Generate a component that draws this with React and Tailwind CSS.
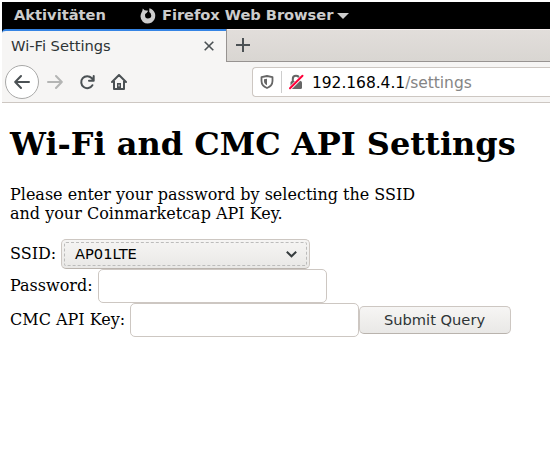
import React from "react";

function TopBar() {
  return (
    <div className="flex h-[27px] items-center bg-black pl-3 text-[14.67px] font-bold leading-none text-[#cccccc]">
      <span className="w-[126px] whitespace-nowrap">Aktivitäten</span>
      <svg className="mr-[6px] h-4 w-4 shrink-0" viewBox="0 0 16 16" fill="#cccccc">
        <path d="M2.8.6 4.6 2.3 8.2 2.8 6.8 4.8 5.2 6Q4.4 10 7.8 10.6 11.6 10.5 11.2 7.2L10.6 5.2 9.2 4 9.4.3Q13.7 1.7 15 5.5 16.2 11.3 11.7 14.5 6.7 17 2.8 13.7-.8 9.8 1.3 5L2.3 3Z" />
      </svg>
      <span className="whitespace-nowrap tracking-[-0.05px]">Firefox Web Browser</span>
      <svg className="ml-1 h-[6px] w-3" viewBox="0 0 12 6" fill="#cccccc">
        <path d="M0 0h12L6 6Z" />
      </svg>
    </div>
  );
}

function TabStrip() {
  return (
    <div className="flex h-[33px] bg-black text-[14.67px] text-[#2e3436]">
      <div className="flex w-[224px] items-center rounded-tl-[4px] border-t-2 border-[#3584e4] bg-[#f6f5f4] pl-[9px]">
        <span className="w-[193px] whitespace-nowrap leading-none">Wi-Fi Settings</span>
        <svg className="mb-[2px] h-[10px] w-[10px]" viewBox="0 0 10 10" stroke="#4b5154" strokeWidth="1.6" fill="none">
          <path d="M.7.7 9.3 9.3M9.3.7.7 9.3" />
        </svg>
      </div>
      <div className="flex flex-1 items-start border-b border-l border-[#979391] bg-linear-to-b from-[#e2dedb] to-[#d9d6d2] pl-[9px] pt-[9px] shadow-[inset_0_1px_#f5eeee]">
        <svg className="h-[14px] w-[14px]" viewBox="0 0 14 14" stroke="#4b5154" strokeWidth="2">
          <path d="M7 0v14M0 7h14" />
        </svg>
      </div>
    </div>
  );
}

function Toolbar() {
  return (
    <div className="flex h-[41px] items-center border-b border-[#cdc7c2] bg-[#f6f5f4] pl-[3px]">
      <div className="flex h-[34px] w-[34px] shrink-0 items-center justify-center rounded-full border border-[#a9a9a8] bg-white">
        <svg className="h-4 w-4" viewBox="0 0 16 16" fill="none" stroke="#4b5154" strokeWidth="2" strokeLinecap="round" strokeLinejoin="round">
          <path d="M15 8H1.5M7 2 1.2 8 7 14" />
        </svg>
      </div>
      <svg className="ml-2 h-4 w-4 shrink-0" viewBox="0 0 16 16" fill="none" stroke="#b4b5b4" strokeWidth="2" strokeLinecap="round" strokeLinejoin="round">
        <path d="M1 8h13.5M9 2l5.8 6L9 14" />
      </svg>
      <svg className="ml-4 h-4 w-4 shrink-0" viewBox="0 0 16 16" fill="none" stroke="#4b5154" strokeWidth="2" strokeLinecap="round" strokeLinejoin="round">
        <path d="M13.4 11.2A6 6 0 1 1 12.6 4L14 5.6M14.7 2v4.7H10" />
      </svg>
      <svg className="ml-4 h-4 w-4 shrink-0" viewBox="0 0 16 16" fill="none" stroke="#4b5154" strokeWidth="2" strokeLinecap="round" strokeLinejoin="round">
        <path d="M1 8 8 1l7 7M3 7v8h10V7" />
        <path d="M6 15V9h4v6Z" fill="#4b5154" stroke="none" />
        <path d="M8 11v1" stroke="#f6f5f4" strokeWidth="1" />
      </svg>
      <div className="ml-[125px] flex h-[30px] flex-1 items-center rounded-l-[4px] border border-r-0 border-[#cdc7c2] bg-white pl-[7px]">
        <svg className="h-[14px] w-[14px] shrink-0" viewBox="0 0 14 14">
          <path d="M7 1 12.5 2.2V6Q12.4 11 7 13 1.6 11 1.5 6V2.2Z" fill="none" stroke="#666666" strokeWidth="1.8" strokeLinejoin="round" />
          <path d="M7 3.7v6.6Q4 9 4 6V4.2Z" fill="#666666" />
        </svg>
        <div className="mx-[7px] h-[22px] w-px bg-[#cdcdcd]" />
        <svg className="-ml-px h-4 w-4 shrink-0" viewBox="0 0 16 16" fill="none">
          <path d="M4.8 8V5Q4.8 1.8 8 1.8T11.2 5v3" stroke="#666666" strokeWidth="2" />
          <rect x="2.5" y="7" width="11.5" height="8" rx="1.5" fill="#666666" />
          <path d="M1 15.5 15 1.5" stroke="#ffffff" strokeWidth="3.4" />
          <path d="M2 14.2 14.5 1.8" stroke="#ff0039" strokeWidth="2" strokeLinecap="round" />
        </svg>
        <span className="ml-2 whitespace-nowrap pt-[3px] text-[15.5px] leading-none tracking-[-0.05px] text-black">
          192.168.4.1<span className="text-[#858585]">/settings</span>
        </span>
      </div>
    </div>
  );
}

function SettingsPage() {
  return (
    <main className="pl-2 pt-[22px] font-['DejaVu_Serif',serif] text-base leading-[19px] text-black">
      <h1 className="whitespace-nowrap text-[32px] font-bold leading-[38px]">
        Wi-Fi and CMC API Settings
      </h1>
      <p className="mt-[22px] whitespace-nowrap">
        Please enter your password by selecting the SSID
        <br />
        and your Coinmarketcap API Key.
      </p>
      <form className="mt-4">
        <div className="flex h-[30px] items-center">
          <label className="w-[51px] whitespace-nowrap pb-[2px]">SSID:</label>
          <div className="h-[30px] w-[249px] rounded-[5px] border border-b-[#b9b3ad] border-[#cdc7c2] bg-linear-to-b from-[#f6f5f4] to-[#e9e8e6] p-[2px]">
            <div className="flex h-6 items-center justify-between rounded-[2px] border border-dashed border-[#bcbcbb] pl-[10px] pr-[9px] font-['DejaVu_Sans',sans-serif] text-[14.67px] leading-none">
              <span>AP01LTE</span>
              <svg className="h-[7px] w-[11px]" viewBox="0 0 11 7" fill="none" stroke="#363c3e" strokeWidth="2">
                <path d="M.8.8 5.5 5.3 10.2.8" />
              </svg>
            </div>
          </div>
        </div>
        <div className="flex h-[34px] items-center">
          <label className="w-[88px] whitespace-nowrap pb-[2px]">Password:</label>
          <input className="h-[34px] w-[229px] rounded-[5px] border border-[#cdc7c2] bg-white outline-none" />
        </div>
        <div className="flex h-[34px] items-center">
          <label className="w-[120px] whitespace-nowrap pb-[2px]">CMC API Key:</label>
          <input className="h-[34px] w-[229px] rounded-[5px] border border-[#cdc7c2] bg-white outline-none" />
          <button type="button" className="h-7 w-[152px] rounded-[5px] border border-[#cdc7c2] border-b-[#b9b3ad] bg-linear-to-b from-[#f6f5f4] to-[#e9e8e6] pr-px font-['DejaVu_Sans',sans-serif] text-[14.67px] leading-none text-[#2e3436]">
            Submit Query
          </button>
        </div>
      </form>
    </main>
  );
}

export default function App() {
  return (
    <div className="h-[450px] w-[550px] overflow-hidden bg-white pl-[2px] pt-[2px] font-['DejaVu_Sans',sans-serif]">
      <TopBar />
      <TabStrip />
      <Toolbar />
      <SettingsPage />
    </div>
  );
}
